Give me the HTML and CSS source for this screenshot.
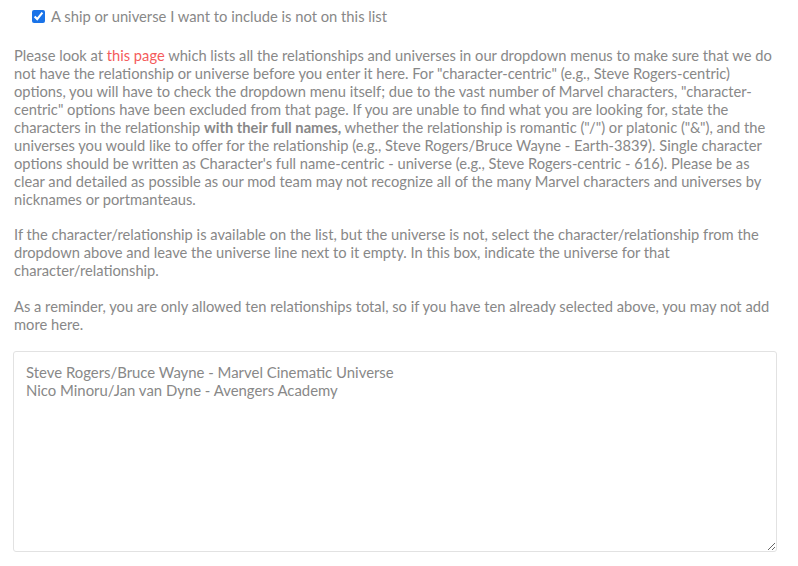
FILE: index.html
```html
<!DOCTYPE html>
<html>
<head>
<meta charset="utf-8">
<link rel="stylesheet" href="styles.css">
</head>
<body>
<div class="field">
  <label class="check">
    <input type="checkbox" checked>
    <span>A ship or universe I want to include is not on this list</span>
  </label>
  <div class="help">
    <p>Please look at <a href="#" class="link">this page</a> which lists all the relationships and universes in our dropdown menus to make sure that we do not have the relationship or universe before you enter it here. For "character-centric" (e.g., Steve Rogers-centric) options, you will have to check the dropdown menu itself; due to the vast number of Marvel characters, "character-centric" options have been excluded from that page. If you are unable to find what you are looking for, state the characters in the relationship <strong>with their full names,</strong> whether the relationship is romantic ("/") or platonic ("&amp;"), and the universes you would like to offer for the relationship (e.g., Steve Rogers/Bruce Wayne - Earth-3839). Single character options should be written as Character's full name-centric - universe (e.g., Steve Rogers-centric - 616). Please be as clear and detailed as possible as our mod team may not recognize all of the many Marvel characters and universes by nicknames or portmanteaus.</p>
    <p>If the character/relationship is available on the list, but the universe is not, select the character/relationship from the dropdown above and leave the universe line next to it empty. In this box, indicate the universe for that character/relationship.</p>
    <p>As a reminder, you are only allowed ten relationships total, so if you have ten already selected above, you may not add more here.</p>
  </div>
  <textarea class="box">Steve Rogers/Bruce Wayne - Marvel Cinematic Universe
Nico Minoru/Jan van Dyne - Avengers Academy</textarea>
</div>
</body>
</html>
```
FILE: styles.css
```css
html, body {
  margin: 0;
  padding: 0;
  background: #fff;
}
body {
  font-family: Lato, "Open Sans", sans-serif;
  font-size: 14.7px;
  line-height: 18px;
  color: #888;
}
.field {
  width: 764px;
  margin-left: 13px;
  padding-top: 7px;
}
.check {
  display: flex;
  align-items: center;
  gap: 6px;
  margin-left: 19px;
  height: 18px;
  font-size: 14.75px;
}
.check input {
  width: 13px;
  height: 13px;
  margin: 0;
  accent-color: #1a73e8;
}
.help {
  margin-top: 21px;
}
.help p {
  margin: 0 0 18px 1px;
}
.help p:nth-child(2) {
  margin-top: -1px;
}
.link {
  color: #f45b5b;
  text-decoration: none;
}
strong {
  font-weight: 700;
}
.box {
  display: block;
  box-sizing: border-box;
  width: 764px;
  height: 201px;
  margin-top: 16px;
  padding: 11px 12px;
  border: 1px solid #e2e2e2;
  border-radius: 3px;
  font-family: Lato, "Open Sans", sans-serif;
  font-size: 14.9px;
  line-height: 18px;
  color: #888;
  resize: vertical;
  outline: none;
}
```
